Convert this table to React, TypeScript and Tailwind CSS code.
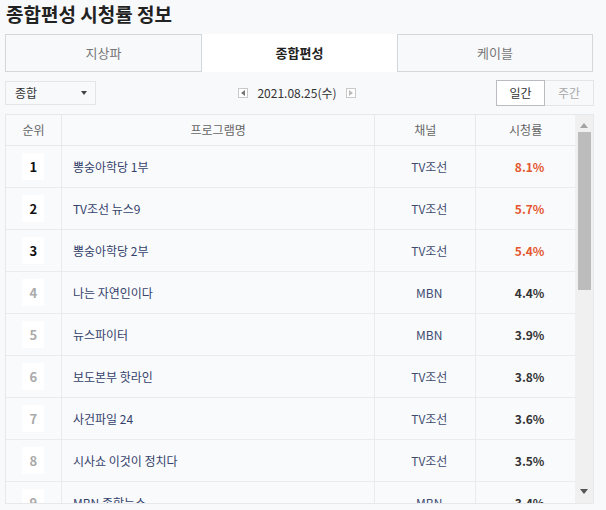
import React from "react";

const FONT = { fontFamily: '"Noto Sans CJK KR", "Noto Sans", sans-serif' };

const rows = [
  { rank: 1, name: "뽕숭아학당 1부", ch: "TV조선", rate: "8.1%" },
  { rank: 2, name: "TV조선 뉴스9", ch: "TV조선", rate: "5.7%" },
  { rank: 3, name: "뽕숭아학당 2부", ch: "TV조선", rate: "5.4%" },
  { rank: 4, name: "나는 자연인이다", ch: "MBN", rate: "4.4%" },
  { rank: 5, name: "뉴스파이터", ch: "MBN", rate: "3.9%" },
  { rank: 6, name: "보도본부 핫라인", ch: "TV조선", rate: "3.8%" },
  { rank: 7, name: "사건파일 24", ch: "TV조선", rate: "3.6%" },
  { rank: 8, name: "시사쇼 이것이 정치다", ch: "TV조선", rate: "3.5%" },
  { rank: 9, name: "MBN 종합뉴스", ch: "MBN", rate: "3.4%" },
];

function DateArrow({ dir }: { dir: "left" | "right" }) {
  return (
    <span className="flex h-[10px] w-[10px] items-center justify-center border border-[#c9c9c9] bg-white">
      <svg width="4" height="6" viewBox="0 0 4 6">
        {dir === "left" ? (
          <path d="M4 0 L0 3 L4 6 Z" fill="#777" />
        ) : (
          <path d="M0 0 L4 3 L0 6 Z" fill="#bbb" />
        )}
      </svg>
    </span>
  );
}

export default function App() {
  return (
    <div className="h-[510px] w-[606px] overflow-hidden bg-[#f8f9fb] text-[#333]" style={FONT}>
      {/* Title */}
      <div className="flex h-[34px] items-start px-[6px] pt-[1px]">
        <h1 className="text-[19px] font-bold leading-[26px] text-[#222]">종합편성 시청률 정보</h1>
      </div>

      {/* Tabs */}
      <div className="mx-[5px] flex h-[38px] w-[588px] text-[13px]">
        <div className="flex w-[197px] items-center justify-center border border-[#d3d6db] text-[#777]">지상파</div>
        <div className="flex w-[195px] items-center justify-center bg-white font-bold text-[#222]">종합편성</div>
        <div className="flex flex-1 items-center justify-center border border-[#d3d6db] text-[#777]">케이블</div>
      </div>

      {/* Controls */}
      <div className="mx-[5px] mt-[8px] flex h-[26px] w-[589px] items-center">
        <div className="flex h-[24px] w-[91px] items-center justify-between border border-[#e3e5e8] pl-[9px] pr-[8px] text-[12px] text-[#333]">
          <span>종합</span>
          <svg width="6" height="4" viewBox="0 0 6 4">
            <path d="M0 0 H6 L3 4 Z" fill="#444" />
          </svg>
        </div>
        <div className="flex flex-1 items-center justify-center gap-[9px] pl-[2px] text-[12px] text-[#333]">
          <DateArrow dir="left" />
          <span>2021.08.25(수)</span>
          <DateArrow dir="right" />
        </div>
        <div className="flex h-[26px] text-[12px]">
          <div className="flex w-[49px] items-center justify-center border border-[#b9bcc1] bg-white text-[#333]">일간</div>
          <div className="flex w-[49px] items-center justify-center border border-l-0 border-[#e3e5e8] text-[#aaa]">주간</div>
        </div>
      </div>

      {/* Table */}
      <div className="mx-[5px] mt-[8px] flex h-[390px] w-[589px] border border-[#e6e8eb] bg-[#f9fafc]">
        <div className="w-[570px] overflow-hidden">
          <div className="flex h-[31px] border-b border-[#e6e8eb] text-[12px] text-[#666]">
            <div className="flex w-[56px] items-center justify-center border-r border-[#e6e8eb]">순위</div>
            <div className="flex w-[314px] items-center justify-center border-r border-[#e6e8eb]">프로그램명</div>
            <div className="flex w-[101px] items-center justify-center border-r border-[#e6e8eb]">채널</div>
            <div className="flex w-[99px] items-center justify-center">시청률</div>
          </div>
          {rows.map((r) => (
            <div key={r.rank} className="flex h-[42px] border-b border-[#e9ebee] text-[12px]">
              <div className="flex w-[56px] items-center justify-center border-r border-[#e9ebee]">
                <span
                  className={
                    "flex h-[27px] w-[22px] items-center justify-center bg-white text-[13px] font-bold " +
                    (r.rank <= 3 ? "text-[#111]" : "text-[#aaa]")
                  }
                >
                  {r.rank}
                </span>
              </div>
              <div className="flex w-[314px] items-center border-r border-[#e9ebee] pl-[11px] text-[#34426b]">{r.name}</div>
              <div className="flex w-[101px] items-center justify-center border-r border-[#e9ebee] pl-[8px] text-[#3e4c70]">{r.ch}</div>
              <div
                className={
                  "flex w-[99px] items-center justify-center pl-[8px] font-bold " +
                  (r.rank <= 3 ? "text-[#e4572e]" : "text-[#333]")
                }
              >
                {r.rate}
              </div>
            </div>
          ))}
        </div>

        {/* Scrollbar */}
        <div className="flex w-[18px] flex-col items-center bg-[#f0f0f1] py-[4px]">
          <svg width="8" height="5" viewBox="0 0 8 5" className="mt-[4px]">
            <path d="M0 5 L4 0 L8 5 Z" fill="#a3a3a3" />
          </svg>
          <div className="mt-[4px] h-[158px] w-[13px] bg-[#bcbcbc]" />
          <div className="flex-1" />
          <svg width="8" height="5" viewBox="0 0 8 5" className="mb-[5px]">
            <path d="M0 0 H8 L4 5 Z" fill="#555" />
          </svg>
        </div>
      </div>
    </div>
  );
}
